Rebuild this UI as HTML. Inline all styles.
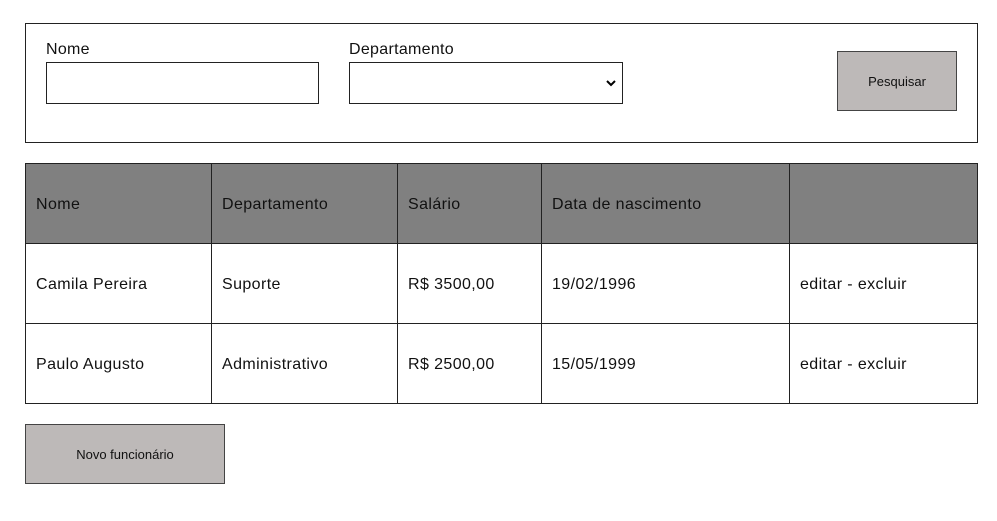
<!DOCTYPE html>
<html><head><meta charset="utf-8"><style>
*{box-sizing:border-box;margin:0;padding:0}
body{width:997px;height:521px;background:#fff;font-family:"Liberation Sans",sans-serif;color:#111;position:relative}
.form{position:absolute;left:25px;top:23px;width:953px;height:120px;border:1px solid #222}
.lbl{position:absolute;font-size:16px;top:17px;letter-spacing:0.3px}
.inp{position:absolute;top:38px;height:42px;border:1px solid #222;background:#fff}
.btn{position:absolute;background:#bdb9b8;border:1px solid #444;font-size:13px;display:flex;align-items:center;justify-content:center}
table{position:absolute;left:25px;top:163px;width:953px;border-collapse:collapse}
td{border:1px solid #222;height:80px;padding-left:10px;padding-top:2px;font-size:16px;letter-spacing:0.4px}
tr.h td{background:#808080}
</style></head><body>
<div class="form">
<div class="lbl" style="left:20px">Nome</div>
<div class="inp" style="left:20px;width:273px"></div>
<div class="lbl" style="left:323px">Departamento</div>
<div class="inp" style="left:323px;width:274px"><svg style="position:absolute;right:6px;top:16px" width="10" height="8" viewBox="0 0 10 8"><path d="M1 2l4 4 4-4" stroke="#000" stroke-width="2" fill="none"/></svg></div>
<div class="btn" style="left:811px;top:27px;width:120px;height:60px">Pesquisar</div>
</div>
<table>
<tr class="h"><td style="width:186px">Nome</td><td style="width:186px">Departamento</td><td style="width:144px">Salário</td><td style="width:248px">Data de nascimento</td><td></td></tr>
<tr><td>Camila Pereira</td><td>Suporte</td><td>R$ 3500,00</td><td>19/02/1996</td><td>editar - excluir</td></tr>
<tr><td>Paulo Augusto</td><td>Administrativo</td><td>R$ 2500,00</td><td>15/05/1999</td><td>editar - excluir</td></tr>
</table>
<div class="btn" style="left:25px;top:424px;width:200px;height:60px">Novo funcionário</div>
</body></html>
